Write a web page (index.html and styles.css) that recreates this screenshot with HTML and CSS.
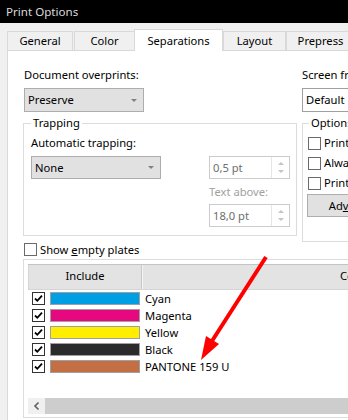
FILE: index.html
```html
<!DOCTYPE html>
<html>

<head>
  <meta charset="utf-8">
  <link rel="stylesheet" href="styles.css">
</head>

<body>
  <div class="titlebar">Print Options</div>

  <div class="tabs">
    <div class="tab tab-general">General</div>
    <div class="tab tab-color">Color</div>
    <div class="tab tab-separations active">Separations</div>
    <div class="tab tab-layout">Layout</div>
    <div class="tab tab-prepress">Prepress</div>
  </div>

  <div class="panel">
    <div class="columns">
      <div class="col-left">
        <div class="label indent">Document overprints:</div>
        <div class="dropdown dropdown-overprints indent">
          <span>Preserve</span><span class="caret"></span>
        </div>

        <fieldset class="group group-trapping">
          <legend>Trapping</legend>
          <div class="trap-grid">
            <div class="trap-left">
              <div class="label">Automatic trapping:</div>
              <div class="dropdown dropdown-trapping">
                <span>None</span><span class="caret"></span>
              </div>
            </div>
            <div class="trap-right">
              <div class="spin spin-first">
                <span class="spin-value">0,5 pt</span>
                <span class="spin-buttons"><span class="arrow-up"></span><span class="arrow-down"></span></span>
              </div>
              <div class="label disabled">Text above:</div>
              <div class="spin spin-second">
                <span class="spin-value">18,0 pt</span>
                <span class="spin-buttons"><span class="arrow-up"></span><span class="arrow-down"></span></span>
              </div>
            </div>
          </div>
        </fieldset>
      </div>

      <div class="col-right">
        <div class="label">Screen frequency:</div>
        <div class="combo">Default</div>

        <fieldset class="group group-options">
          <legend>Options</legend>
          <div class="check-row"><span class="checkbox"></span><span>Print separations in color</span></div>
          <div class="check-row"><span class="checkbox"></span><span>Always overprint black</span></div>
          <div class="check-row"><span class="checkbox"></span><span>Print negative</span></div>
          <div class="button">Ad<u>v</u>anced...</div>
        </fieldset>
      </div>
    </div>

    <div class="check-row show-empty"><span class="checkbox"></span><span>Show <u>e</u>mpty plates</span></div>

    <div class="plates">
      <div class="plate-list">
        <div class="plate-head">
          <div class="head-include">Include</div>
          <div class="head-color">Color name</div>
        </div>

        <div class="plate-row">
          <span class="checkbox checked"><svg viewBox="0 0 11 11" width="11" height="11"><path d="M2 5.5 L4.3 7.8 L9 2.6" /></svg></span>
          <span class="swatch swatch-cyan"></span>
          <span class="plate-name">Cyan</span>
        </div>
        <div class="plate-row">
          <span class="checkbox checked"><svg viewBox="0 0 11 11" width="11" height="11"><path d="M2 5.5 L4.3 7.8 L9 2.6" /></svg></span>
          <span class="swatch swatch-magenta"></span>
          <span class="plate-name">Magenta</span>
        </div>
        <div class="plate-row">
          <span class="checkbox checked"><svg viewBox="0 0 11 11" width="11" height="11"><path d="M2 5.5 L4.3 7.8 L9 2.6" /></svg></span>
          <span class="swatch swatch-yellow"></span>
          <span class="plate-name">Yellow</span>
        </div>
        <div class="plate-row">
          <span class="checkbox checked"><svg viewBox="0 0 11 11" width="11" height="11"><path d="M2 5.5 L4.3 7.8 L9 2.6" /></svg></span>
          <span class="swatch swatch-black"></span>
          <span class="plate-name">Black</span>
        </div>
        <div class="plate-row">
          <span class="checkbox checked"><svg viewBox="0 0 11 11" width="11" height="11"><path d="M2 5.5 L4.3 7.8 L9 2.6" /></svg></span>
          <span class="swatch swatch-pantone"></span>
          <span class="plate-name">PANTONE 159 U</span>
        </div>

        <div class="hscroll">
          <span class="scroll-left"><svg viewBox="0 0 8 10" width="8" height="10"><path d="M5.5 1.5 L2 5 L5.5 8.5" /></svg></span>
          <span class="scroll-thumb"></span>
        </div>
      </div>
    </div>
  </div>

  <!-- red callout pointing at the spot colour -->
  <svg class="callout" viewBox="0 0 348 420" width="348" height="420">
    <line x1="266" y1="257" x2="212" y2="341" />
    <polygon points="201,360 219,344 206,336" />
  </svg>
</body>

</html>
```

FILE: styles.css
```css
html,
body {
  margin: 0;
  overflow: hidden;
}

body {
  position: relative;
  width: 348px;
  height: 420px;
  background-color: #F0F0F0;
  font-family: 'Noto Sans', 'Open Sans', sans-serif;
  font-size: 11.2px;
  line-height: 16px;
  color: #000;
}

.titlebar {
  height: 23px;
  line-height: 23px;
  padding-left: 6px;
  background-color: #000;
  color: #DADADA;
  font-size: 11.6px;
}

/* tab strip */

.tabs {
  display: flex;
  align-items: flex-end;
  height: 21px;
  margin-top: 6px;
  padding-left: 7px;
}

.tab {
  box-sizing: border-box;
  flex: none;
  height: 19px;
  line-height: 17px;
  border: 1px solid #D9D9D9;
  border-bottom: none;
  background-color: #F0F0F0;
  text-align: center;
  white-space: nowrap;
}

.tab-general {
  width: 66px;
}

.tab-color {
  width: 61px;
  margin-left: 1px;
}

.tab-separations {
  width: 89px;
  margin-left: -1px;
}

.tab-layout {
  width: 63px;
}

.tab-prepress {
  width: 69px;
}

.tab.active {
  position: relative;
  z-index: 1;
  height: 22px;
  margin-bottom: -1px;
  padding-top: 2px;
  background-color: #fff;
}

/* page panel */

.panel {
  width: 520px;
  height: 420px;
  margin-left: 7px;
  padding: 16px 0 0 15px;
  border: 1px solid #D9D9D9;
  background-color: #fff;
}

.columns {
  display: grid;
  grid-template-columns: 274px 220px;
  column-gap: 5px;
  align-items: start;
}

.label {
  white-space: nowrap;
}

.label.disabled {
  color: #A0A0A0;
}

.indent {
  margin-left: 1px;
}

.dropdown {
  box-sizing: border-box;
  display: flex;
  align-items: center;
  justify-content: space-between;
  border: 1px solid #ADADAD;
  background-color: #E1E1E1;
  padding: 0 6px 0 3px;
}

.dropdown-overprints {
  width: 120px;
  height: 24px;
  margin-top: 5px;
}

.dropdown-trapping {
  width: 130px;
  height: 23px;
  margin-top: 5px;
}

.caret {
  width: 0;
  height: 0;
  border-left: 3px solid transparent;
  border-right: 3px solid transparent;
  border-top: 3px solid #808080;
}

.combo {
  box-sizing: border-box;
  width: 120px;
  height: 24px;
  margin-top: 5px;
  padding-left: 3px;
  line-height: 22px;
  border: 1px solid #A0A0A0;
  background-color: #fff;
}

/* group boxes */

.group {
  box-sizing: border-box;
  min-width: 0;
  margin: 3px 0 0 0;
  border: 1px solid #DCDCDC;
}

.group legend {
  padding: 0 2px;
  line-height: 16px;
}

.group-trapping {
  width: 274px;
  padding: 4px 0 8px 7px;
}

.group-options {
  width: 220px;
  padding: 2px 0 24px 5px;
}

.group-options legend {
  margin-left: 1px;
}

.trap-grid {
  display: flex;
  gap: 48px;
}

.spin {
  box-sizing: border-box;
  display: flex;
  width: 81px;
  height: 23px;
  border: 1px solid #CCCCCC;
  color: #6D6D6D;
}

.spin-first {
  margin-top: 21px;
}

.spin-second {
  margin-top: 4px;
}

.trap-right .label {
  margin-top: 5px;
}

.spin-value {
  flex: 1;
  padding-left: 3px;
  line-height: 21px;
}

.spin-buttons {
  display: flex;
  flex-direction: column;
  align-items: center;
  justify-content: space-around;
  width: 17px;
  border-left: 1px solid #E6E6E6;
  padding: 3px 0;
}

.arrow-up,
.arrow-down {
  width: 0;
  height: 0;
  border-left: 3px solid transparent;
  border-right: 3px solid transparent;
}

.arrow-up {
  border-bottom: 3px solid #C4C4C4;
}

.arrow-down {
  border-top: 3px solid #C4C4C4;
}

/* checkboxes */

.check-row {
  display: flex;
  align-items: center;
  height: 20px;
  white-space: nowrap;
}

.checkbox {
  box-sizing: border-box;
  flex: none;
  display: inline-flex;
  align-items: center;
  justify-content: center;
  width: 13px;
  height: 13px;
  margin-right: 3px;
  border: 1px solid #6A6A6A;
  background-color: #fff;
}

.checkbox.checked {
  border-color: #333;
}

.checkbox svg path {
  fill: none;
  stroke: #000;
  stroke-width: 1.8;
}

.button {
  box-sizing: border-box;
  width: 104px;
  height: 23px;
  margin: 1px 0 0 -1px;
  line-height: 21px;
  border: 1px solid #ADADAD;
  background-color: #E1E1E1;
  text-align: center;
}

.show-empty {
  height: 15px;
  margin-left: 1px;
}

/* plates list */

.plates {
  box-sizing: border-box;
  width: 480px;
  height: 159px;
  margin-top: 2px;
  padding: 4px 0 3px 4px;
  border: 1px solid #DCDCDC;
}

.plate-list {
  display: flex;
  flex-direction: column;
  height: 150px;
}

.plate-head {
  display: flex;
  height: 24px;
  line-height: 22px;
  border-top: 1px solid #C4C4C4;
  border-bottom: 1px solid #D5D5D5;
  background-color: #E3E3E3;
}

.head-include {
  box-sizing: border-box;
  width: 114px;
  border-left: 1px solid #D5D5D5;
  border-right: 1px solid #C8C8C8;
  text-align: center;
}

.head-color {
  flex: 1;
  padding-left: 197px;
  border-left: 1px solid #F4F4F4;
}

.plate-row {
  display: flex;
  align-items: center;
  height: 17px;
  padding-left: 4px;
  white-space: nowrap;
}

.plate-row .checkbox {
  margin-right: 5px;
}

.swatch {
  box-sizing: border-box;
  width: 90px;
  height: 13px;
  margin-right: 5px;
  border: 1px solid #A0A0A0;
}

.swatch-cyan {
  background-color: #009FE3;
}

.swatch-magenta {
  background-color: #E5087E;
}

.swatch-yellow {
  background-color: #FFEE00;
}

.swatch-black {
  background-color: #2B2B2B;
}

.swatch-pantone {
  background-color: #C46E43;
}

.hscroll {
  display: flex;
  height: 16px;
  margin-top: auto;
  background-color: #F0F0F0;
}

.scroll-left {
  display: flex;
  align-items: center;
  justify-content: center;
  width: 17px;
}

.scroll-left svg path {
  fill: none;
  stroke: #606060;
  stroke-width: 1.6;
}

.scroll-thumb {
  flex: 1;
  background-color: #CDCDCD;
}

/* overlay arrow */

.callout {
  position: absolute;
  top: 0;
  left: 0;
  pointer-events: none;
}

.callout line {
  stroke: #FF0000;
  stroke-width: 4;
}

.callout polygon {
  fill: #FF0000;
}
```
